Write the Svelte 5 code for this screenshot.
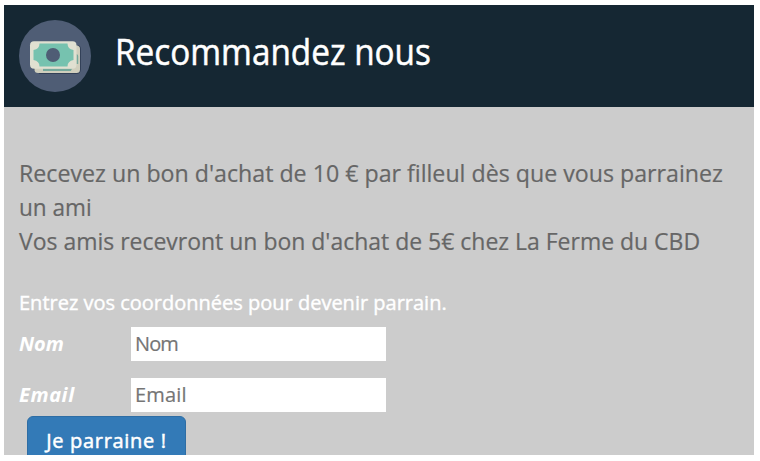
<script>
  const fields = [
    { id: 'nom', label: 'Nom', type: 'text' },
    { id: 'email', label: 'Email', type: 'email' }
  ];
</script>

<main class="card">
  <header>
    <svg class="logo" viewBox="0 0 72 72" width="72" height="72" aria-hidden="true">
      <circle cx="36" cy="36" r="36" fill="#4f5d75" />
      <path d="M11 28h3v19q0 3 5 4l1 3h37q5 0 5-5V29q0-3-3-4v23H13q-2 0-2-4z" fill="#334158" />
      <rect x="15.500" y="25.500" width="45.500" height="27.500" rx="3.500" fill="#d0cfbd" />
      <path d="M24 51h28q0-1.500 1.500-2.500H24zM57.500 34q1.700.500 1.700 2v8h-1.700z" fill="#76a99c" />
      <rect x="11" y="21.200" width="46.500" height="27.500" rx="4" fill="#e0e0d1" />
      <path d="M20.500 23.500h28q0 5.500 6 6.500v10q-6 1-6 6.500h-28q0-5.500-6-6.500V30q6-1 6-6.500z" fill="#76c2af" />
      <circle cx="34" cy="35" r="7" fill="#4f5d75" />
    </svg>
    <h1><span>Recommandez nous</span></h1>
  </header>
  <section>
    <div class="offer">
      <div><span class="o1">Recevez un bon d'achat de 10 € par filleul dès que vous parrainez</span></div>
      <div><span class="o2">un ami</span></div>
      <div><span class="o3">Vos amis recevront un bon d'achat de 5€ chez La Ferme du CBD</span></div>
    </div>
    <form onsubmit={(e) => e.preventDefault()}>
      <p class="intro">Entrez vos coordonnées pour devenir parrain.</p>
      {#each fields as field}
        <div class="row">
          <label for={field.id}>{field.label}</label>
          <input id={field.id} type={field.type} placeholder={field.label} />
        </div>
      {/each}
      <button type="submit">Je parraine !</button>
    </form>
  </section>
</main>

<style>
  :global(body) { margin: 0; background: #fff; }
  .card {
    box-sizing: border-box;
    width: 750px;
    height: 450px;
    margin: 5px 0 0 4px;
    overflow: hidden;
    background: #ccc;
    font-family: "Trebuchet MS", "Open Sans", sans-serif;
  }
  header {
    box-sizing: border-box;
    height: 102px;
    padding: 0 15px;
    display: flex;
    align-items: center;
    gap: 24px;
    background: #152733;
  }
  .logo { flex: none; }
  h1 {
    margin: -8px 0 0;
    color: #fff;
    font-size: 36px;
    font-weight: 400;
    line-height: 40px;
    white-space: nowrap;
  }
  h1 span, .offer span { display: inline-block; transform-origin: 0 50%; }
  h1 span { transform: scaleX(0.925); -webkit-text-stroke: 0.5px currentColor; }
  section { padding: 49px 15px 0; }
  .offer {
    color: #666;
    font-size: 24px;
    line-height: 34px;
    white-space: nowrap;
    -webkit-text-stroke: 0.2px currentColor;
  }
  .o1 { transform: scaleX(0.966); }
  .o2 { transform: scaleX(0.94); }
  .o3 { transform: scaleX(0.957); }
  form { padding-top: 30px; }
  .intro {
    margin: 0 0 10px;
    color: #fff;
    font-size: 20px;
    line-height: 29px;
    white-space: nowrap;
    -webkit-text-stroke: 0.4px currentColor;
  }
  .row { display: flex; height: 34px; margin-bottom: 17px; }
  label {
    width: 112px;
    color: #fff;
    font-size: 20px;
    font-weight: 700;
    font-style: italic;
    line-height: 34px;
  }
  label[for="email"] { letter-spacing: 0.6px; }
  input {
    box-sizing: border-box;
    width: 255px;
    height: 34px;
    padding: 0 4px 2px;
    border: 0;
    background: #fff;
    font: 20px "Trebuchet MS", "Open Sans", sans-serif;
    -webkit-text-stroke: 0.2px #757575;
  }
  #nom { letter-spacing: -0.9px; }
  #email { letter-spacing: 0.2px; }
  input::placeholder { color: #757575; opacity: 1; }
  button {
    box-sizing: border-box;
    display: block;
    width: 159px;
    height: 50px;
    margin: -13px 0 0 8px;
    padding: 0 0 2px;
    border: 1px solid #2e6da4;
    border-radius: 6px;
    background: #337ab7;
    color: #fff;
    font: 20px "Trebuchet MS", "Open Sans", sans-serif;
    letter-spacing: 0.7px;
    white-space: nowrap;
    -webkit-text-stroke: 0.5px currentColor;
  }
</style>
